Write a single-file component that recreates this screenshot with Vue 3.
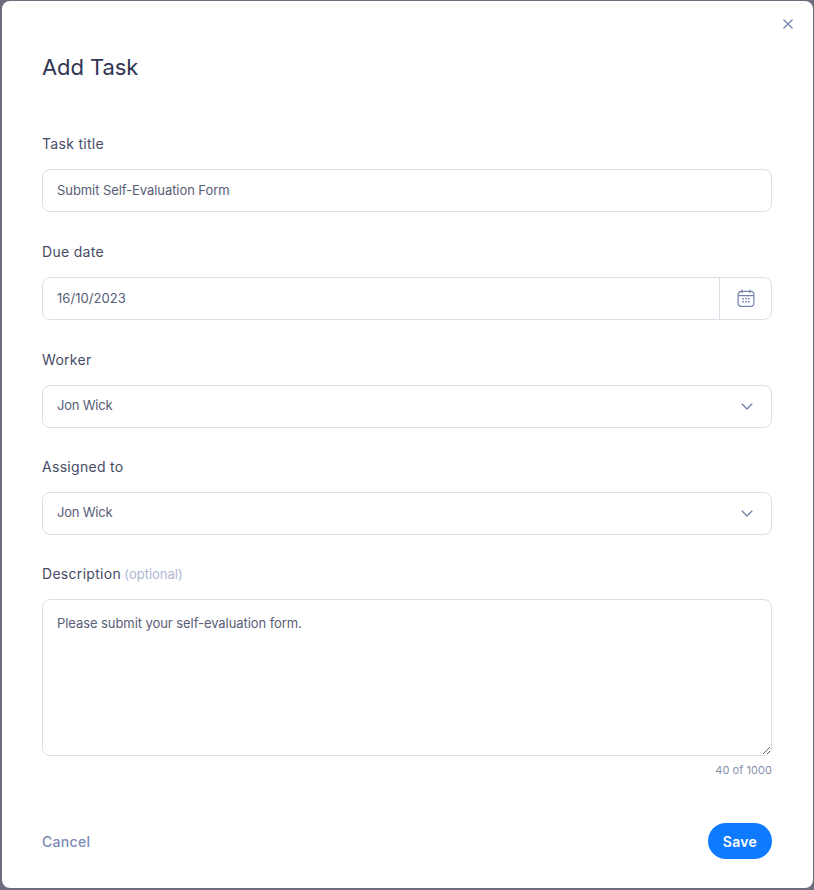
<script setup>
const title = 'Submit Self-Evaluation Form'
const due = '16/10/2023'
const worker = 'Jon Wick'
const assigned = 'Jon Wick'
const description = 'Please submit your self-evaluation form.'
</script>

<template>
  <div class="backdrop">
    <div class="modal">
      <button class="close" aria-label="Close">
        <svg width="12" height="12" viewBox="0 0 12 12" fill="none" stroke="#7482ae" stroke-width="1.3">
          <path d="M1.5 1.5l9 9M10.5 1.5l-9 9" />
        </svg>
      </button>
      <h1 class="heading">Add Task</h1>

      <div class="form">
        <div class="field wide-gap">
          <label class="label">Task title</label>
          <input class="control" :value="title" />
        </div>

        <div class="field wide-gap">
          <label class="label">Due date</label>
          <div class="date">
            <input class="date-input" :value="due" />
            <span class="date-btn">
              <svg class="date-icon" width="18" height="18" viewBox="0 0 18 18" fill="none" stroke="#7482ae" stroke-width="1.2">
                <rect x="1.1" y="2.4" width="15.8" height="14.9" rx="3.4" />
                <path d="M1.1 6.6h15.8M5 .7v3.4M13 .7v3.4" />
                <path d="M5.4 9.8h1.6M8.2 9.8h1.6M11 9.8h1.6M5.4 12.8h1.6M8.2 12.8h1.6M11 12.8h1.6" stroke-width="1.4" />
              </svg>
            </span>
          </div>
        </div>

        <div class="field">
          <label class="label">Worker</label>
          <div class="select">
            <span class="select-value">{{ worker }}</span>
            <svg width="12" height="7" viewBox="0 0 12 7" fill="none" stroke="#7482ae" stroke-width="1.4">
              <path d="M.8.8L6 6l5.2-5.2" />
            </svg>
          </div>
        </div>

        <div class="field">
          <label class="label">Assigned to</label>
          <div class="select">
            <span class="select-value">{{ assigned }}</span>
            <svg width="12" height="7" viewBox="0 0 12 7" fill="none" stroke="#7482ae" stroke-width="1.4">
              <path d="M.8.8L6 6l5.2-5.2" />
            </svg>
          </div>
        </div>

        <div class="field">
          <label class="label">Description <span class="optional">(optional)</span></label>
          <textarea class="control area" :value="description"></textarea>
          <div class="count">40 of 1000</div>
        </div>
      </div>

      <div class="actions">
        <button class="cancel">Cancel</button>
        <button class="save">Save</button>
      </div>
    </div>
  </div>
</template>

<style>
html, body { margin: 0; background: #6c6d7c; }
</style>

<style scoped>
.backdrop {
  width: 814px;
  height: 890px;
  box-sizing: border-box;
  padding: 1px 1px 2px 2px;
  background: #6c6d7c;
  font-family: Inter, "Liberation Sans", sans-serif;
  overflow: hidden;
}
.modal {
  position: relative;
  box-sizing: border-box;
  height: 887px;
  background: #fff;
  border-radius: 8px;
  padding: 52px 41px 0 40px;
}
.close {
  position: absolute;
  top: 17px;
  right: 19px;
  padding: 0;
  border: 0;
  background: none;
  display: flex;
}
.heading {
  margin: 0;
  font-size: 22px;
  line-height: 28px;
  font-weight: 400;
  letter-spacing: -0.1px;
  color: #2f3552;
}
.form {
  margin-top: 54px;
  display: flex;
  flex-direction: column;
  gap: 30px;
}
.field {
  display: flex;
  flex-direction: column;
  gap: 17px;
}
.wide-gap {
  margin-bottom: 1px;
}
.label {
  font-size: 14px;
  line-height: 17px;
  font-weight: 400;
  letter-spacing: 0.3px;
  color: #474c66;
}
.optional {
  font-size: 13px;
  line-height: 1;
  letter-spacing: 0px;
  margin-left: -1px;
  color: #b0b8d4;
}
.control, .date, .select {
  box-sizing: border-box;
  width: 100%;
  height: 43px;
  border: 1px solid #dcdeea;
  border-radius: 8px;
  background: #fff;
  font-family: inherit;
  font-size: 13px;
  color: #585d76;
}
.control {
  padding: 0 14px 2px;
  outline: none;
  letter-spacing: -0.07px;
}
.date {
  display: flex;
  align-items: stretch;
}
.date-input {
  flex: 1;
  min-width: 0;
  border: 0;
  outline: none;
  padding: 0 14px 2px;
  background: transparent;
  border-radius: 8px 0 0 8px;
  font: inherit;
  color: inherit;
  letter-spacing: 0.05px;
}
.date-btn {
  width: 51px;
  border-left: 1px solid #dcdeea;
  display: flex;
  align-items: center;
  justify-content: center;
}
.date-icon {
  margin-bottom: 1px;
}
.select {
  display: flex;
  align-items: center;
  justify-content: space-between;
  padding: 0 18px 0 14px;
  letter-spacing: -0.2px;
}
.select-value {
  margin-bottom: 4px;
}
.area {
  height: 157px;
  padding: 14px;
  line-height: 18px;
  display: block;
}
.count {
  margin-top: -10px;
  text-align: right;
  font-size: 11px;
  line-height: 14px;
  letter-spacing: 0.05px;
  color: #8790ad;
}
.actions {
  margin-top: 46px;
  display: flex;
  justify-content: space-between;
  align-items: center;
}
.cancel {
  padding: 0;
  border: 0;
  background: none;
  font-family: inherit;
  font-size: 14px;
  font-weight: 500;
  letter-spacing: 0.3px;
  color: #7c8ab5;
}
.save {
  width: 64px;
  height: 36px;
  border: 0;
  border-radius: 18px;
  background: #0d7aff;
  color: #fff;
  font-family: inherit;
  font-size: 14px;
  font-weight: 600;
  letter-spacing: 0.3px;
}
</style>
